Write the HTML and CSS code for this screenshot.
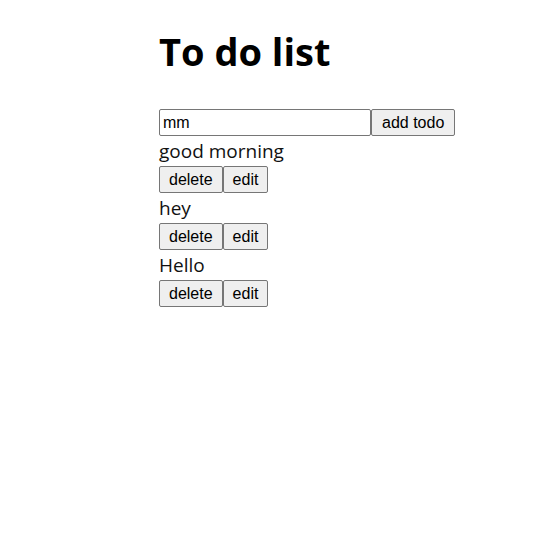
FILE: index.html
```html
<!DOCTYPE html>
<html>
<head>
<meta charset="utf-8">
<link rel="stylesheet" href="styles.css">
</head>
<body>
<div class="app">
  <h1 class="title">To do list</h1>
  <div class="add-row">
    <input class="todo-input" type="text" value="mm">
    <button class="btn btn-add">add todo</button>
  </div>
  <div class="todo">
    <div class="todo-text">good morning</div>
    <div class="actions"><button class="btn">delete</button><button class="btn">edit</button></div>
  </div>
  <div class="todo">
    <div class="todo-text">hey</div>
    <div class="actions"><button class="btn">delete</button><button class="btn">edit</button></div>
  </div>
  <div class="todo">
    <div class="todo-text">Hello</div>
    <div class="actions"><button class="btn">delete</button><button class="btn">edit</button></div>
  </div>
</div>
</body>
</html>
```
FILE: styles.css
```css
html, body {
  margin: 0;
  padding: 0;
  background: #fff;
}
.app {
  width: 222px;
  margin: 0 auto;
  color: #000;
  font-family: "Open Sans", "Noto Sans", sans-serif;
}
.title {
  margin: 0;
  padding-top: 25px;
  height: 109px;
  box-sizing: border-box;
  font-size: 38px;
  line-height: 52px;
  font-weight: 700;
  white-space: nowrap;
}
.add-row {
  display: flex;
  width: max-content;
}
.todo-input {
  box-sizing: border-box;
  width: 212px;
  height: 27px;
  margin: 0;
  padding: 1px 3px;
  border: 1px solid #767676;
  border-radius: 2px;
  font-family: "Liberation Sans", Arial, sans-serif;
  font-size: 16px;
  color: #000;
}
.btn {
  box-sizing: border-box;
  height: 27px;
  margin: 0;
  padding: 1px 9px;
  border: 1px solid #767676;
  border-radius: 2px;
  background: #efefef;
  font-family: "Liberation Sans", Arial, sans-serif;
  font-size: 16px;
  color: #000;
}
.btn-add {
  padding: 1px 10px;
}
.todo-text {
  height: 30px;
  line-height: 30px;
  font-size: 19px;
  color: #111;
  white-space: nowrap;
}
.todo:first-of-type .todo-text {
  height: 31px;
  line-height: 32px;
}
.actions {
  display: flex;
  width: max-content;
}
```
